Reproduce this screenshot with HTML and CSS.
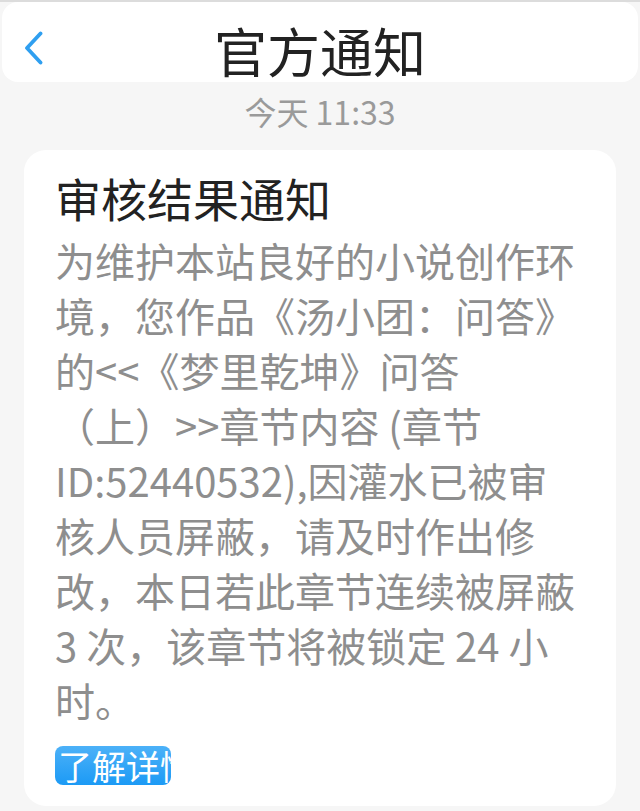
FILE: index.html
```html
<!DOCTYPE html>
<html lang="zh-CN">

<head>
    <meta charset="UTF-8">
    <title>官方通知</title>
    <meta name="viewport" content="width=device-width, initial-scale=1">
    <link rel="stylesheet" href="styles.css">
</head>

<body>
    <div class="page">
        <div class="topbar">
            <button class="back-btn" aria-label="返回">
                <svg width="20" height="34" viewBox="0 0 20 34">
                    <path d="M16.5 2.5 L3 17 L16.5 31.5" fill="none" stroke="#2f9ff0" stroke-width="3.8" stroke-linecap="round" stroke-linejoin="round" />
                </svg>
            </button>
            <h1>官方通知</h1>
            <span></span>
        </div>

        <div class="msg-time">今天 11:33</div>

        <div class="card">
            <h2>审核结果通知</h2>
            <p class="msg-body">为维护本站良好的小说创作环<br>境，您作品《汤小团：问答》<br>的&lt;&lt;《梦里乾坤》问答<br>（上）&gt;&gt;章节内容 (章节<br>ID:52440532),因灌水已被审<br>核人员屏蔽，请及时作出修<br>改，本日若此章节连续被屏蔽<br>3 次，该章节将被锁定 24 小<br>时。</p>
            <a class="detail-btn" href="#">了解详情</a>
        </div>
    </div>
</body>

</html>
```

FILE: styles.css
```css
body {
    margin: 0;
    padding: 0;
    background: #f6f6f6;
    font-family: "Noto Sans CJK SC", "Noto Sans", sans-serif;
}

.page {
    border-top: 2px solid #dcdcdc;
    min-height: 809px;
}

/* 顶部导航 */
.topbar {
    margin: 0 2px;
    height: 80px;
    background: #fff;
    border-radius: 16px;
    display: grid;
    grid-template-columns: 1fr auto 1fr;
    align-items: center;
}

.back-btn {
    justify-self: start;
    background: none;
    border: none;
    padding: 12px 0 0 22px;
    cursor: pointer;
    display: flex;
}

.topbar h1 {
    margin: 0;
    padding-top: 16px;
    font-size: 53px;
    font-weight: 400;
    color: #222;
    line-height: 64px;
}

.msg-time {
    text-align: center;
    color: #9a9a9a;
    font-size: 32px;
    line-height: 44px;
    margin-top: 7px;
}

/* 消息卡片 */
.card {
    background: #fff;
    border-radius: 22px;
    margin: 17px 24px 0 24px;
    padding: 19px 31px 21px 31px;
}

.card h2 {
    margin: 0;
    font-size: 46px;
    font-weight: 400;
    color: #222;
    line-height: 56px;
}

.msg-body {
    margin: 8px 0 0 0;
    font-size: 40px;
    line-height: 55px;
    color: #8e8e8e;
    white-space: nowrap;
}

.detail-btn {
    display: block;
    margin-top: 18px;
    width: 113px;
    height: 39px;
    padding-left: 3px;
    overflow: hidden;
    white-space: nowrap;
    font-size: 34px;
    line-height: 39px;
    color: #fff;
    text-decoration: none;
    border-radius: 8px;
    background: linear-gradient(180deg, #4cb1f8 0%, #1c9af5 100%);
}
```
